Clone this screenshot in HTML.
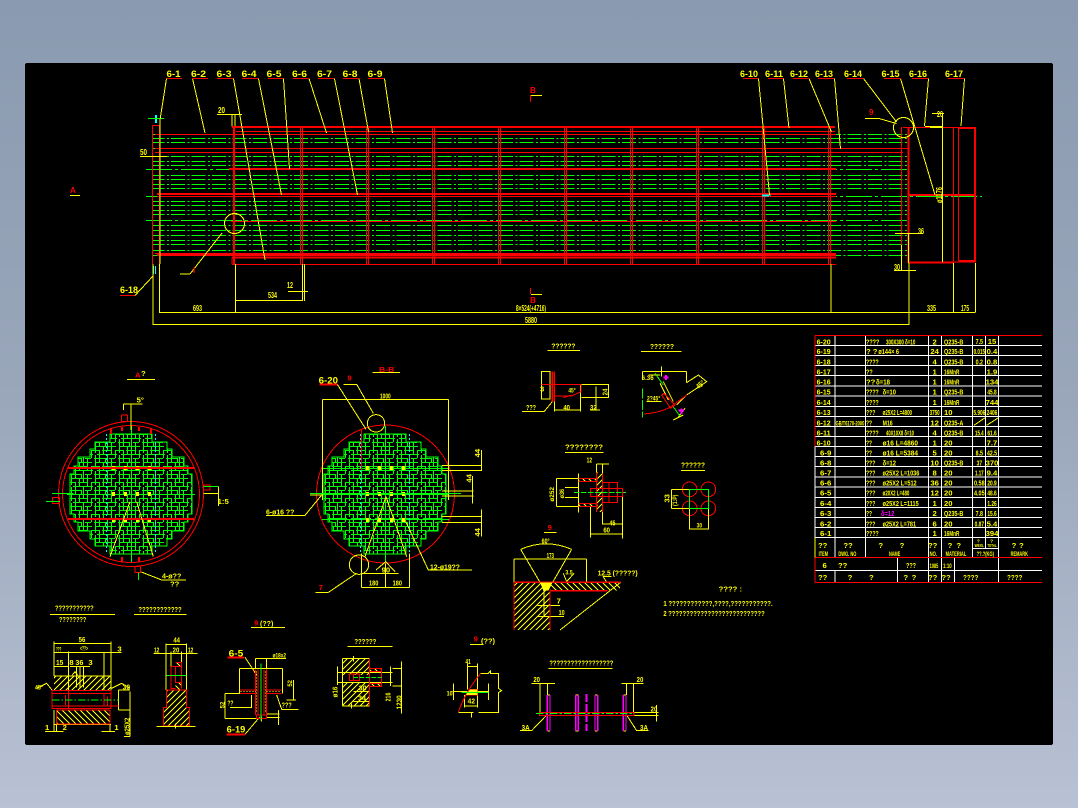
<!DOCTYPE html>
<html><head><meta charset="utf-8"><title>CAD</title>
<style>
html,body{margin:0;padding:0;width:1078px;height:808px;overflow:hidden;background:linear-gradient(180deg,#8a9ab0 0%,#9aa7bb 50%,#b9c1d4 100%)}
svg{position:absolute;left:0;top:0;display:block}
svg *{shape-rendering:crispEdges}
.y,.r,.g,.m,.c{fill:none;stroke-width:1}
.y{stroke:#ff0}.r{stroke:#f00}.g{stroke:#0f0}.m{stroke:#f0f}.c{stroke:#0ff}
.z .y,.z .r,.z .g,.z .m,.z .c{stroke-width:3}
.z .th{stroke-width:6}
.th2{stroke-width:2}
text{font-family:"Liberation Sans",sans-serif;font-weight:700;fill:#ff0;stroke:none;font-size:8px}
.z text{font-size:23px}
text.rt{fill:#f00}text.mt{fill:#f0f}
.m0{text-anchor:middle}
.lb text{font-size:9.5px}
</style></head><body>
<svg width="1078" height="808" viewBox="0 0 1078 808" xmlns="http://www.w3.org/2000/svg">
<defs>
<pattern id="tile" width="24" height="16" patternUnits="userSpaceOnUse">
<path class="g" d="M0 .5H9M12 .5H24M0 4.5H5M8 4.5H16M19 4.5H24M0 8.5H10M14 8.5H24M2 12.5H8M11 12.5H22M.5 0V4M4.5 1V9M8.5 4V12M12.5 0V7M16.5 4V16M20.5 0V9M12.5 9V16M4.5 12V16M.5 9V16M22.5 12V16"/>
</pattern>
<pattern id="h1" width="18" height="18" patternUnits="userSpaceOnUse">
<path class="y" style="stroke-width:3" d="M-3 3L3 -3M0 18L18 0M15 21L21 15"/>
</pattern>
<pattern id="h2" width="18" height="18" patternUnits="userSpaceOnUse">
<path class="y" style="stroke-width:3" d="M-3 15L3 21M0 0L18 18M15 -3L21 3"/>
</pattern>
<clipPath id="stair"><polygon points="-21,-60 21,-60 21,-52 36,-52 36,-45 41,-45 41,-37 53,-37 53,-28 57,-28 57,-20 61,-20 61,20 57,20 57,28 53,28 53,37 41,37 41,45 36,45 36,52 21,52 21,60 -21,60 -21,52 -36,52 -36,45 -41,45 -41,37 -53,37 -53,28 -57,28 -57,20 -61,20 -61,-20 -57,-20 -57,-28 -53,-28 -53,-37 -41,-37 -41,-45 -36,-45 -36,-52 -21,-52"/></clipPath>
<g id="plate">
<g clip-path="url(#stair)"><rect x="-72" y="-64" width="144" height="128" fill="url(#tile)"/></g>
<polygon class="g" points="-21,-60 21,-60 21,-52 36,-52 36,-45 41,-45 41,-37 53,-37 53,-28 57,-28 57,-20 61,-20 61,20 57,20 57,28 53,28 53,37 41,37 41,45 36,45 36,52 21,52 21,60 -21,60 -21,52 -36,52 -36,45 -41,45 -41,37 -53,37 -53,28 -57,28 -57,20 -61,20 -61,-20 -57,-20 -57,-28 -53,-28 -53,-37 -41,-37 -41,-45 -36,-45 -36,-52 -21,-52"/>
<path class="g" d="M-64 .5H64M-64 -25.5H64M-64 25.5H64M.5 -68V68"/>
<path class="c" stroke-dasharray="2 2" d="M-24.5 -60V60M24.5 -60V60"/>
<g fill="#ff0"><rect x="-19" y="-28" width="3" height="4"/><rect x="-7" y="-28" width="3" height="4"/><rect x="5" y="-28" width="3" height="4"/><rect x="17" y="-28" width="3" height="4"/><rect x="-19" y="-2" width="3" height="4"/><rect x="-7" y="-2" width="3" height="4"/><rect x="5" y="-2" width="3" height="4"/><rect x="17" y="-2" width="3" height="4"/><rect x="-19" y="24" width="3" height="4"/><rect x="-7" y="24" width="3" height="4"/><rect x="5" y="24" width="3" height="4"/><rect x="17" y="24" width="3" height="4"/></g>
</g>
</defs>

<rect x="25" y="63" width="1028" height="682" rx="2" fill="#000"/>

<!-- MAIN VIEW -->
<path class="g" stroke-dasharray="14 2.5 2 2" stroke-dashoffset="2.3" d="M153 134.5H909M153 138.5H909M153 142.5H909M153 148.5H909M153 156.5H909M153 161.5H909M153 165.5H909M153 175.5H909M153 179.5H909M153 184.5H909M153 188.5H909M153 201.5H909M153 205.5H909M153 210.5H909M153 214.5H909M153 225.5H909M153 230.5H909M153 235.5H909M153 240.5H909M153 244.5H909M153 250.5H909M153 255.5H909"/>
<path class="g" stroke-dasharray="26 3 3 3" d="M146 169.5H909M146 196.5H982M146 220.5H909"/>
<path class="r" d="M152.5 125V264M152.5 125.5H159.5V131M159.5 125V264M232 114V126.5H835M236 131.5H835M155 134.5H836M155 148.5H909M155 152.5H903M231 221.5H836M157 196.5H836M155 253.5H836M232 264.5H836M232 258V264"/>
<path class="r th2" d="M229 169H836M232 127H835M157 194H836M232 257.5H836M157 255H836M908 195H976M234 127V264M908.5 128V263M908 262.5H953"/>
<path class="r" d="M300.5 127V264M302.5 127V264M366.5 127V264M368.5 127V264M432.5 127V264M434.5 127V264M498.5 127V264M500.5 127V264M564.5 127V264M566.5 127V264M630.5 127V264M632.5 127V264M696.5 127V264M698.5 127V264M762.5 127V264M764.5 127V264M828.5 127V264M830.5 127V264M901.5 127V263M953.5 127V263M958.5 128V261M903 127.5H976M953 262H976"/>
<path class="r th2" d="M975 127V262M959 128H975M959 261H975"/>
<path class="c" d="M153.5 266V274M155.5 266V274M762 195H771M762 196H769"/>
<rect x="155" y="115" width="2" height="8" fill="#0ff"/>
<path class="g" d="M148 118.5H164"/>
<!-- leaders -->
<path class="y" d="M166.5 78.5L160 120M160 120V264M192.5 78.5L205 133M233.5 78.5L265 260M258.5 78.5L281.5 195M283.5 78.5L289.5 169M309 78.5L326.5 133M334.5 78.5L357.5 195M359 78.5L368.5 132M384.5 78.5L392.5 133M758.5 78.5L769.5 195M783.5 78.5L789 128M809 78.5L831.5 132M834.5 78.5L840.5 149M863.5 78.5L896.5 122M900.5 78.5L935 195M928.5 78.5L924.5 126M964.5 78.5L961 126M865 118.5H879L896.5 123.5M190 274L222 233M190 274H180"/>
<circle class="y" cx="234.5" cy="223.5" r="10"/><circle class="y" cx="903.5" cy="127.5" r="10"/>
<path class="r" d="M167 78.5H182M192 78.5H208M217 78.5H233M242 78.5H258M268 78.5H283M293 78.5H309M318 78.5H334M343 78.5H359M368 78.5H384M743 78.5H758M768 78.5H783M793 78.5H809M818 78.5H834M847 78.5H863M884 78.5H901M912 78.5H928M948 78.5H964"/>
<g class="lb">
<text x="166.5" y="77" textLength="14" lengthAdjust="spacingAndGlyphs">6-1</text><text x="191" y="77" textLength="15" lengthAdjust="spacingAndGlyphs">6-2</text><text x="216.5" y="77" textLength="15" lengthAdjust="spacingAndGlyphs">6-3</text><text x="241.5" y="77" textLength="15" lengthAdjust="spacingAndGlyphs">6-4</text><text x="266.5" y="77" textLength="15" lengthAdjust="spacingAndGlyphs">6-5</text><text x="292" y="77" textLength="15" lengthAdjust="spacingAndGlyphs">6-6</text><text x="317" y="77" textLength="15" lengthAdjust="spacingAndGlyphs">6-7</text><text x="342.5" y="77" textLength="15" lengthAdjust="spacingAndGlyphs">6-8</text><text x="367.5" y="77" textLength="15" lengthAdjust="spacingAndGlyphs">6-9</text>
<text x="740" y="77" textLength="18" lengthAdjust="spacingAndGlyphs">6-10</text><text x="765" y="77" textLength="18" lengthAdjust="spacingAndGlyphs">6-11</text><text x="790" y="77" textLength="18" lengthAdjust="spacingAndGlyphs">6-12</text><text x="815" y="77" textLength="18" lengthAdjust="spacingAndGlyphs">6-13</text><text x="844" y="77" textLength="18" lengthAdjust="spacingAndGlyphs">6-14</text><text x="881.5" y="77" textLength="18" lengthAdjust="spacingAndGlyphs">6-15</text><text x="909" y="77" textLength="18" lengthAdjust="spacingAndGlyphs">6-16</text><text x="945" y="77" textLength="18" lengthAdjust="spacingAndGlyphs">6-17</text>
<text x="120" y="293" textLength="18" lengthAdjust="spacingAndGlyphs">6-18</text>
</g>
<path class="r" d="M120 295.5H135"/><path class="y" d="M135 295.5L153 276"/>
<!-- dims -->
<path class="y" d="M159.5 264V312M153 264V325M235.5 264V312M831 264V312M909 263V325M953.5 263V312M975.5 263V312M159 312.5H975.5M153 324.5H909M236 300.5H302M302.5 264V301M304.5 264V301M288 291.5H308M217 114.5H242M232 114V126M235 114V126M140 156.5H167M942.5 113V262M925 126.5H942M895 233.5H923M908.5 233V263M894 270.5H916M901.5 245V270M932 113.5H944"/>
<path class="y th2" d="M930 127H942"/>
<path class="r" d="M530.5 95V102M530.5 288V294"/><path class="y" d="M531 95.5H542M531 294.5H542M70 195.5H80"/>
<text x="218" y="113" textLength="7" lengthAdjust="spacingAndGlyphs">20</text><text x="140" y="155" textLength="7" lengthAdjust="spacingAndGlyphs">50</text><text x="268" y="298" textLength="9" lengthAdjust="spacingAndGlyphs">534</text><text x="193" y="311" textLength="9" lengthAdjust="spacingAndGlyphs">693</text><text x="516" y="311" textLength="30" lengthAdjust="spacingAndGlyphs">8×524(+4716)</text><text x="525" y="323" textLength="12" lengthAdjust="spacingAndGlyphs">5880</text><text x="927" y="311" textLength="9" lengthAdjust="spacingAndGlyphs">335</text><text x="961" y="311" textLength="8" lengthAdjust="spacingAndGlyphs">175</text><text x="287" y="288" textLength="6" lengthAdjust="spacingAndGlyphs">12</text><text x="918" y="234" textLength="6" lengthAdjust="spacingAndGlyphs">36</text><text x="894" y="270" textLength="6" lengthAdjust="spacingAndGlyphs">30</text><text x="937" y="117" textLength="6" lengthAdjust="spacingAndGlyphs">20</text>
<text transform="translate(942 203) rotate(-90)" textLength="16" lengthAdjust="spacingAndGlyphs">ø1176</text>
<text class="rt" x="530" y="93">B</text><text class="rt" x="530" y="303">B</text><text class="rt" x="70" y="193" >A</text><text class="rt" x="193" y="273">I</text><text class="rt" x="869" y="115">9</text>

<!-- PLATE A -->
<use href="#plate" x="131" y="494"/>
<circle class="r" cx="131" cy="494" r="72.5"/><circle class="r" cx="131" cy="494" r="68.5"/>
<path class="r th2" d="M68 468H194M68 519H194"/>
<path class="r" style="stroke-width:2" d="M111 428V434M122 427V431M139 427V431M151 429V434M122 557V562M139 557V562"/>
<g class="z" transform="translate(30 360) scale(.33333)">
<path class="y" d="M291 58H375M303 132V210M280 132H338M280 132V150M520 400H565V380M565 400V438M395 660H468M334 636L395 660M300 425L240 590M320 425L370 590M112 400H130"/>
<path class="r" d="M275 165H292V185H275ZM520 375H540V390H520ZM68 412H88V430H68ZM315 620H332V638H315Z"/>
<path class="g" d="M48 424H90M66 400H130M520 380H565M325 638V660"/>
<text class="rt" x="315" y="52">A</text><text x="333" y="48">?</text><text x="320" y="128">5°</text><text x="563" y="432">1:5</text><text x="396" y="656" textLength="58" lengthAdjust="spacingAndGlyphs">4-ø??</text><text x="420" y="680">??</text>
</g>

<!-- PLATE B -->
<use href="#plate" x="385" y="494"/>
<circle class="r" cx="385.5" cy="494" r="69"/>
<g class="z" transform="translate(260 360) scale(.33333)">
<path class="y" d="M338 37H420M187 118H565M187 118V420M565 118V420M232 73L318 208M250 73H290L340 160M546 317H664M546 331H664M546 393H640M546 408H640M546 469H664M546 488H664M664 270V333M664 448V530M638 348V430M18 466H135L185 405M185 405H150M305 580V682M449 580V682M305 682H449M377 610V682M305 640H415M348 630L377 605L405 635M205 697L290 640M166 697H205M435 480L505 630H636M378 410L315 590M378 410L440 590"/>
<circle class="y" cx="348" cy="190" r="26"/><circle class="y" cx="297" cy="614" r="29"/>
<path class="r" style="stroke-width:6" d="M178 73H232"/>
<path class="r" d="M305 210V330"/>
<path class="g" d="M150 400H603"/>
<text class="rt" x="357" y="36" textLength="46" lengthAdjust="spacingAndGlyphs">B-B</text><text x="176" y="70" textLength="58" lengthAdjust="spacingAndGlyphs" style="font-size:28px">6-20</text><text class="rt" x="262" y="62">9</text><text x="360" y="116" textLength="32" lengthAdjust="spacingAndGlyphs">1000</text>
<text x="18" y="463" textLength="85" lengthAdjust="spacingAndGlyphs">6-ø16 ??</text><text x="510" y="628" textLength="90" lengthAdjust="spacingAndGlyphs">12-ø19??</text><text class="rt" x="176" y="690">7</text>
<text x="327" y="677" textLength="28" lengthAdjust="spacingAndGlyphs">180</text><text x="398" y="677" textLength="28" lengthAdjust="spacingAndGlyphs">180</text><text x="365" y="638">90</text>
<text transform="translate(660 292) rotate(-90)">44</text><text transform="translate(634 368) rotate(-90)">44</text><text transform="translate(660 530) rotate(-90)">44</text>
</g>

<!-- TABLE -->
<g class="z" transform="translate(810 330) scale(.33333)">
<path class="y" style="stroke:#fff" d="M15 46H696M15 76H696M15 107H696M15 137H696M15 168H696M15 198H696M15 229H696M15 259H696M15 290H696M15 320H696M15 349H696M15 380H696M15 410H696M15 441H696M15 471H696M15 502H696M15 532H696M15 563H696M15 593H696M15 622H696M15 722H696M75 16V622M166 16V622M355 16V683M394 16V683M488 16V622M527 16V622M566 16V622M15 350V622M75 622V683M166 622V683M488 622V683M566 622V683M527 622V655M488 655H566M262 683V758M355 683V758M394 683V758M433 683V758M566 683V758M75 722V758"/>
<path class="r" d="M15 16H696M15 16V349M15 683H696M15 758H696M15 683V758"/>
<path class="y" d="M492 286L524 264M530 286L564 264"/>
<path class="y" style="stroke:#ff0" d="M15 622V683"/>
<g>
<text x="20" y="44" textLength="42" lengthAdjust="spacingAndGlyphs">6-20</text><text x="20" y="72" textLength="42" lengthAdjust="spacingAndGlyphs">6-19</text><text x="20" y="103" textLength="42" lengthAdjust="spacingAndGlyphs">6-18</text><text x="20" y="133" textLength="42" lengthAdjust="spacingAndGlyphs">6-17</text><text x="20" y="164" textLength="42" lengthAdjust="spacingAndGlyphs">6-16</text><text x="20" y="194" textLength="42" lengthAdjust="spacingAndGlyphs">6-15</text><text x="20" y="225" textLength="42" lengthAdjust="spacingAndGlyphs">6-14</text><text x="20" y="255" textLength="42" lengthAdjust="spacingAndGlyphs">6-13</text><text x="20" y="286" textLength="42" lengthAdjust="spacingAndGlyphs">6-12</text><text x="20" y="316" textLength="42" lengthAdjust="spacingAndGlyphs">6-11</text><text x="20" y="346" textLength="42" lengthAdjust="spacingAndGlyphs">6-10</text>
<text x="30" y="376" textLength="34" lengthAdjust="spacingAndGlyphs">6-9</text><text x="30" y="406" textLength="34" lengthAdjust="spacingAndGlyphs">6-8</text><text x="30" y="437" textLength="34" lengthAdjust="spacingAndGlyphs">6-7</text><text x="30" y="467" textLength="34" lengthAdjust="spacingAndGlyphs">6-6</text><text x="30" y="497" textLength="34" lengthAdjust="spacingAndGlyphs">6-5</text><text x="30" y="528" textLength="34" lengthAdjust="spacingAndGlyphs">6-4</text><text x="30" y="558" textLength="34" lengthAdjust="spacingAndGlyphs">6-3</text><text x="30" y="589" textLength="34" lengthAdjust="spacingAndGlyphs">6-2</text><text x="30" y="618" textLength="34" lengthAdjust="spacingAndGlyphs">6-1</text>
<text x="77" y="286" textLength="86" lengthAdjust="spacingAndGlyphs" style="font-size:19px">GB/T6170-2000</text>
<text x="168" y="44" textLength="40" lengthAdjust="spacingAndGlyphs">????</text><text x="228" y="44" textLength="88" lengthAdjust="spacingAndGlyphs">300X300 δ=10</text>
<text x="168" y="72">? ?</text><text x="205" y="72" textLength="62" lengthAdjust="spacingAndGlyphs">ø144× 6</text>
<text x="168" y="103" textLength="38" lengthAdjust="spacingAndGlyphs">????</text><text x="168" y="133" textLength="20" lengthAdjust="spacingAndGlyphs">??</text>
<text x="168" y="164">??</text><text x="198" y="164" textLength="42" lengthAdjust="spacingAndGlyphs">δ=18</text><text x="168" y="194" textLength="38" lengthAdjust="spacingAndGlyphs">????</text><text x="218" y="194" textLength="40" lengthAdjust="spacingAndGlyphs">δ=10</text><text x="168" y="225" textLength="38" lengthAdjust="spacingAndGlyphs">????</text>
<text x="168" y="255" textLength="28" lengthAdjust="spacingAndGlyphs">???</text><text x="218" y="255" textLength="88" lengthAdjust="spacingAndGlyphs">ø25X2 L=4800</text>
<text x="168" y="286" textLength="18" lengthAdjust="spacingAndGlyphs">??</text><text x="218" y="286" textLength="30" lengthAdjust="spacingAndGlyphs">M16</text>
<text x="168" y="316" textLength="38" lengthAdjust="spacingAndGlyphs">????</text><text x="228" y="316" textLength="84" lengthAdjust="spacingAndGlyphs">40X10X8 δ=10</text>
<text x="168" y="346" textLength="18" lengthAdjust="spacingAndGlyphs">??</text><text x="218" y="346" textLength="106" lengthAdjust="spacingAndGlyphs">ø16 L=4860</text>
<text x="168" y="376" textLength="18" lengthAdjust="spacingAndGlyphs">??</text><text x="218" y="376" textLength="106" lengthAdjust="spacingAndGlyphs">ø16 L=5384</text>
<text x="168" y="407" textLength="28" lengthAdjust="spacingAndGlyphs">???</text><text x="218" y="407" textLength="40" lengthAdjust="spacingAndGlyphs">δ=12</text>
<text x="168" y="437" textLength="28" lengthAdjust="spacingAndGlyphs">???</text><text x="218" y="437" textLength="110" lengthAdjust="spacingAndGlyphs">ø25X2 L=1036</text>
<text x="168" y="467" textLength="28" lengthAdjust="spacingAndGlyphs">???</text><text x="218" y="467" textLength="102" lengthAdjust="spacingAndGlyphs">ø25X2 L=512</text>
<text x="168" y="497" textLength="28" lengthAdjust="spacingAndGlyphs">???</text><text x="218" y="497" textLength="80" lengthAdjust="spacingAndGlyphs">ø20X2 L=480</text>
<text x="168" y="528" textLength="28" lengthAdjust="spacingAndGlyphs">???</text><text x="218" y="528" textLength="108" lengthAdjust="spacingAndGlyphs">ø25X2 L=1115</text>
<text x="168" y="558" textLength="18" lengthAdjust="spacingAndGlyphs">??</text><text class="mt" x="213" y="558" textLength="40" lengthAdjust="spacingAndGlyphs">δ=12</text>
<text x="168" y="589" textLength="28" lengthAdjust="spacingAndGlyphs">???</text><text x="218" y="589" textLength="100" lengthAdjust="spacingAndGlyphs">ø25X2 L=781</text>
<text x="168" y="618" textLength="38" lengthAdjust="spacingAndGlyphs">????</text>
</g>
<g class="m0">
<text x="374" y="44">2</text><text x="374" y="72">24</text><text x="374" y="103">4</text><text x="374" y="133">1</text><text x="374" y="164">1</text><text x="374" y="194">1</text><text x="374" y="225">1</text><text x="374" y="255" textLength="30" lengthAdjust="spacingAndGlyphs">3750</text><text x="374" y="286">12</text><text x="374" y="316">4</text><text x="374" y="346">1</text><text x="374" y="376">5</text><text x="374" y="407">10</text><text x="374" y="437">8</text><text x="374" y="467">36</text><text x="374" y="497">12</text><text x="374" y="528">1</text><text x="374" y="558">2</text><text x="374" y="589">6</text><text x="374" y="618">1</text>
</g>
<g>
<text x="402" y="44" textLength="58" lengthAdjust="spacingAndGlyphs">Q235-B</text><text x="402" y="72" textLength="58" lengthAdjust="spacingAndGlyphs">Q235-B</text><text x="402" y="103" textLength="58" lengthAdjust="spacingAndGlyphs">Q235-B</text><text x="402" y="133" textLength="46" lengthAdjust="spacingAndGlyphs">16MnR</text><text x="402" y="164" textLength="46" lengthAdjust="spacingAndGlyphs">16MnR</text><text x="402" y="194" textLength="58" lengthAdjust="spacingAndGlyphs">Q235-B</text><text x="402" y="225" textLength="46" lengthAdjust="spacingAndGlyphs">16MnR</text><text x="402" y="255">10</text><text x="402" y="286" textLength="58" lengthAdjust="spacingAndGlyphs">Q235-A</text><text x="402" y="316" textLength="58" lengthAdjust="spacingAndGlyphs">Q235-B</text><text x="402" y="346">20</text><text x="402" y="376">20</text><text x="402" y="407" textLength="58" lengthAdjust="spacingAndGlyphs">Q235-B</text><text x="402" y="437">20</text><text x="402" y="467">20</text><text x="402" y="497">20</text><text x="402" y="528">20</text><text x="402" y="558" textLength="58" lengthAdjust="spacingAndGlyphs">Q235-B</text><text x="402" y="589">20</text><text x="402" y="618" textLength="46" lengthAdjust="spacingAndGlyphs">16MnR</text>
</g>
<g class="m0">
<text x="508" y="42" textLength="22" lengthAdjust="spacingAndGlyphs">7.5</text><text x="508" y="72" textLength="34" lengthAdjust="spacingAndGlyphs">0.015</text><text x="508" y="103" textLength="22" lengthAdjust="spacingAndGlyphs">0.2</text><text x="508" y="255" textLength="36" lengthAdjust="spacingAndGlyphs">5.906</text><text x="508" y="316" textLength="26" lengthAdjust="spacingAndGlyphs">15.4</text><text x="508" y="376" textLength="22" lengthAdjust="spacingAndGlyphs">8.5</text><text x="508" y="407" textLength="16" lengthAdjust="spacingAndGlyphs">37</text><text x="508" y="437" textLength="26" lengthAdjust="spacingAndGlyphs">1.17</text><text x="508" y="467" textLength="32" lengthAdjust="spacingAndGlyphs">0.58</text><text x="508" y="497" textLength="32" lengthAdjust="spacingAndGlyphs">4.05</text><text x="508" y="558" textLength="22" lengthAdjust="spacingAndGlyphs">7.8</text><text x="508" y="589" textLength="28" lengthAdjust="spacingAndGlyphs">0.87</text>
<text x="546" y="42">15</text><text x="546" y="72">0.4</text><text x="546" y="103">0.8</text><text x="546" y="133">1.9</text><text x="546" y="164">134</text><text x="546" y="194" textLength="28" lengthAdjust="spacingAndGlyphs">45.8</text><text x="546" y="225">744</text><text x="546" y="255" textLength="32" lengthAdjust="spacingAndGlyphs">2406</text><text x="546" y="316" textLength="28" lengthAdjust="spacingAndGlyphs">61.6</text><text x="546" y="346">7.7</text><text x="546" y="376" textLength="30" lengthAdjust="spacingAndGlyphs">42.5</text><text x="546" y="407">370</text><text x="546" y="437">9.4</text><text x="546" y="467" textLength="28" lengthAdjust="spacingAndGlyphs">20.9</text><text x="546" y="497" textLength="28" lengthAdjust="spacingAndGlyphs">48.6</text><text x="546" y="528" textLength="28" lengthAdjust="spacingAndGlyphs">1.26</text><text x="546" y="558" textLength="28" lengthAdjust="spacingAndGlyphs">15.6</text><text x="546" y="589">5.4</text><text x="546" y="618">394</text>
</g>
<g class="m0">
<text x="38" y="654">??</text><text x="114" y="654">??</text><text x="212" y="654">?</text><text x="276" y="654">?</text><text x="368" y="654">??</text><text x="420" y="654">?</text><text x="446" y="654">?</text><text x="612" y="654">?</text><text x="634" y="654">?</text>
<text x="40" y="678" textLength="28" lengthAdjust="spacingAndGlyphs" style="font-size:19px">ITEM</text><text x="112" y="678" textLength="54" lengthAdjust="spacingAndGlyphs" style="font-size:19px">DWG. NO</text><text x="254" y="678" textLength="34" lengthAdjust="spacingAndGlyphs" style="font-size:19px">NAME</text><text x="370" y="678" textLength="22" lengthAdjust="spacingAndGlyphs" style="font-size:19px">NO.</text><text x="438" y="678" textLength="62" lengthAdjust="spacingAndGlyphs" style="font-size:19px">MATERIAL</text><text x="628" y="678" textLength="52" lengthAdjust="spacingAndGlyphs" style="font-size:19px">REMARK</text>
<text x="505" y="638" style="font-size:15px">?</text><text x="545" y="638" style="font-size:15px">?</text><text x="508" y="651" textLength="28" lengthAdjust="spacingAndGlyphs" style="font-size:13px">WEIG.</text><text x="546" y="651" textLength="28" lengthAdjust="spacingAndGlyphs" style="font-size:13px">TOTAL</text><text x="526" y="678" textLength="52" lengthAdjust="spacingAndGlyphs" style="font-size:18px">??.?(KG)</text>
<text x="44" y="714">6</text><text x="98" y="714">??</text><text x="303" y="714" textLength="30" lengthAdjust="spacingAndGlyphs">???</text><text x="372" y="714" textLength="26" lengthAdjust="spacingAndGlyphs" style="font-size:19px">1085</text><text x="412" y="714" textLength="26" lengthAdjust="spacingAndGlyphs" style="font-size:19px">1:10</text>
<text x="38" y="750">??</text><text x="120" y="750">?</text><text x="184" y="750">?</text><text x="287" y="750">?</text><text x="312" y="750">?</text><text x="368" y="750">??</text><text x="408" y="750">??</text><text x="482" y="750" textLength="46" lengthAdjust="spacingAndGlyphs">????</text><text x="614" y="750" textLength="46" lengthAdjust="spacingAndGlyphs">????</text>
</g>
</g>

<!-- BOTTOM LEFT DETAILS -->
<g class="z" transform="translate(30 600) scale(.33333)">
<path class="y" d="M60 43H255M312 43H470M663 82H765"/>
<text x="75" y="32" textLength="116" lengthAdjust="spacingAndGlyphs">???????????</text><text x="87" y="66" textLength="82" lengthAdjust="spacingAndGlyphs">????????</text><text x="325" y="36" textLength="130" lengthAdjust="spacingAndGlyphs">????????????</text><text class="rt" x="672" y="76">9</text><text x="690" y="78" textLength="40" lengthAdjust="spacingAndGlyphs">(??)</text>
<!-- detail1 -->
<rect x="72" y="228" width="171" height="42" fill="url(#h1)"/><rect x="80" y="330" width="160" height="42" fill="url(#h2)"/>
<path class="y" d="M72 130H243M72 125V228M243 125V270M72 158H275M115 155V272M222 158V272M72 200H115M120 200H180M140 200V262M150 200V262M160 200V262M72 228H243M72 374H243M72 330V395M80 372V395M240 372V395M45 395H100M215 395H255M265 270V330M300 275V410M282 410H300M265 270H300M265 330H300M20 265L50 250L66 270M245 265L275 250L300 265M127 225L135 215L143 225"/>
<path class="r" d="M66 272H243V325H66ZM115 272V325M66 280H243M66 318H243M222 280V318M80 330V372M240 330V372M80 372H240M80 330H240M106 285V315M232 290V318H265"/>
<path class="g" stroke-dasharray="22 6 5 6" d="M66 300H265"/>
<text x="146" y="126" textLength="20" lengthAdjust="spacingAndGlyphs">56</text><text x="78" y="155" textLength="16" lengthAdjust="spacingAndGlyphs" style="font-size:18px">???</text><text x="150" y="152" textLength="24" lengthAdjust="spacingAndGlyphs" style="font-size:18px">&lt;??&gt;</text><text x="262" y="155">3</text><text x="78" y="195" textLength="22" lengthAdjust="spacingAndGlyphs">15</text><text x="118" y="195">8</text><text x="136" y="195" textLength="24" lengthAdjust="spacingAndGlyphs">36</text><text x="175" y="195">3</text><text x="15" y="268" textLength="24" lengthAdjust="spacingAndGlyphs" style="font-size:20px">45°</text><text x="278" y="268" textLength="22" lengthAdjust="spacingAndGlyphs">30</text><text x="45" y="390">1</text><text x="98" y="390">2</text><text x="253" y="390">1</text><text transform="translate(298 405) rotate(-90)" textLength="52" lengthAdjust="spacingAndGlyphs">ø25X2</text>
<!-- detail2 -->
<path class="y" d="M408 133H470M408 130V270M470 130V270M370 160H503M423 155V200M455 155V190"/>
<polygon points="410,270 470,270 470,322 478,322 478,378 400,378 400,322 410,322" fill="url(#h1)"/>
<rect x="438" y="187" width="17" height="13" fill="url(#h2)"/><rect x="437" y="248" width="17" height="22" fill="url(#h2)"/>
<path class="r" d="M410 270H470V322H478V378H400V322H410ZM423 200H455V265M423 200V265H437M437 187H455V200M437 200V248H455"/>
<path class="g" d="M410 226H470"/>
<path class="y" d="M380 379H497M437 370V385"/>
<text x="430" y="128" textLength="20" lengthAdjust="spacingAndGlyphs">44</text><text x="372" y="157" textLength="16" lengthAdjust="spacingAndGlyphs">12</text><text x="428" y="157" textLength="20" lengthAdjust="spacingAndGlyphs">20</text><text x="474" y="157" textLength="16" lengthAdjust="spacingAndGlyphs">12</text>
<!-- detail3 -->
<path class="y" d="M676 175H768M676 175V205M710 175V205M628 205H757M628 205V280M757 205V280M645 172L680 225M585 280H630M585 280V355M585 355H680M600 322H665V285M755 328H805M740 285L755 328M790 240V300M770 300H798M710 352H748M710 342H748M745 330V375M645 403L690 350M695 350V365"/>
<path class="r th" d="M592 172H642M590 403H645"/>
<path class="r" d="M676 208V345M684 208V345M702 208V345M710 208V345M630 270H678M708 270H755M630 280H678M708 280H755M680 345H710V356H680Z"/>
<path class="g" d="M693 190V362"/>
<path class="y" stroke-dasharray="3 6" d="M680 215V340M706 215V340M632 275H678M710 275H752"/>
<text x="596" y="170" textLength="44" lengthAdjust="spacingAndGlyphs" style="font-size:28px">6-5</text><text x="728" y="172" textLength="40" lengthAdjust="spacingAndGlyphs" style="font-size:20px">ø18x2</text><text x="592" y="316" textLength="18" lengthAdjust="spacingAndGlyphs">??</text><text x="755" y="322" textLength="30" lengthAdjust="spacingAndGlyphs">???</text><text x="590" y="398" textLength="56" lengthAdjust="spacingAndGlyphs" style="font-size:28px">6-19</text><text transform="translate(584 325) rotate(-90)" style="font-size:18px">52</text><text transform="translate(786 260) rotate(-90)" style="font-size:18px">52</text>
</g>

<!-- BOTTOM MIDDLE DETAILS -->
<g class="z" transform="translate(320 620) scale(.33333)">
<path class="y" d="M82 79H218M450 73H490M685 146H878"/>
<text x="103" y="72" textLength="66" lengthAdjust="spacingAndGlyphs">??????</text><text class="rt" x="461" y="64">9</text><text x="483" y="70" textLength="42" lengthAdjust="spacingAndGlyphs">(??)</text><text x="688" y="136" textLength="192" lengthAdjust="spacingAndGlyphs">??????????????????</text>
<!-- d1 -->
<rect x="67" y="115" width="81" height="50" fill="url(#h1)"/><rect x="67" y="188" width="81" height="70" fill="url(#h1)"/><rect x="148" y="145" width="37" height="10" fill="url(#h2)"/><rect x="148" y="190" width="37" height="10" fill="url(#h2)"/>
<path class="y" d="M67 115H148M67 115V258M67 258H148M52 158H218M52 188H218M52 140V195M100 108V125M95 250V265M148 115V258M100 215H148M100 245H148M245 125V280M218 145H245M218 198H245M212 140V198"/>
<path class="r" d="M88 162H118V182H88ZM100 162V182M148 115V258M148 145H185V200H148M148 155H185M148 190H185"/>
<path class="g" stroke-dasharray="14 4" d="M100 172H185"/>
<text x="116" y="212" textLength="24" lengthAdjust="spacingAndGlyphs">30</text><text x="114" y="242" textLength="24" lengthAdjust="spacingAndGlyphs">34</text><text transform="translate(52 232) rotate(-90)" textLength="32" lengthAdjust="spacingAndGlyphs">ø16</text><text transform="translate(211 244) rotate(-90)" textLength="26" lengthAdjust="spacingAndGlyphs">216</text><text transform="translate(244 268) rotate(-90)" textLength="42" lengthAdjust="spacingAndGlyphs">1230</text>
<!-- d2 -->
<path class="y" d="M442 140H472M442 130V208M472 130V208M397 215H505M400 190V240M505 190V240M433 225V262M472 225V262M433 258H472M415 277H460M455 277V292M482 160H505L512 152V160H535V205L545 212L535 218V277H475"/>
<path class="r" d="M415 275Q440 210 482 160M437 225H472V208H450Z"/>
<polygon points="437,225 472,225 472,209 450,209" fill="#ff0"/>
<path class="g" d="M425 217H505"/>
<text x="436" y="132" textLength="16" lengthAdjust="spacingAndGlyphs">41</text><text x="380" y="226" textLength="18" lengthAdjust="spacingAndGlyphs" style="font-size:18px">10</text><text x="443" y="250" textLength="22" lengthAdjust="spacingAndGlyphs">42</text>
<!-- d3 -->
<path class="y" d="M635 190H705M905 190H970M660 190V280M682 190V225M920 190V225M940 190V280M600 332H635L680 285M950 332L920 285M950 332H985M942 278H1015M942 287H1015M1010 255V305M690 225H682M918 225H910M767 225H775M825 225H833M690 333H682M918 333H910M767 333H775M825 333H833"/>
<path class="m" style="stroke-width:4" d="M682 225V333M690 225V333M767 225V333M775 225V333M825 225V333M833 225V333M910 225V333M918 225V333"/>
<path class="m" style="stroke-width:6" stroke-dasharray="24 6" d="M800 222V333"/>
<rect class="r" x="658" y="277" width="284" height="10"/>
<path class="g" stroke-dasharray="22 6 8 6" d="M648 281H942"/>
<text x="640" y="186" textLength="20" lengthAdjust="spacingAndGlyphs">20</text><text x="950" y="186" textLength="20" lengthAdjust="spacingAndGlyphs">20</text><text x="605" y="330" textLength="24" lengthAdjust="spacingAndGlyphs">3A</text><text x="960" y="330" textLength="24" lengthAdjust="spacingAndGlyphs">3A</text><text x="992" y="274" textLength="20" lengthAdjust="spacingAndGlyphs">20</text>
</g>

<!-- UPPER MIDDLE DETAILS -->
<g class="z" transform="translate(500 330) scale(.33333)">
<path class="y" d="M142 62H240M423 64H545M195 368H310M543 421H615M132 607H170"/>
<text x="154" y="56" textLength="72" lengthAdjust="spacingAndGlyphs">??????</text><text x="450" y="57" textLength="72" lengthAdjust="spacingAndGlyphs">??????</text><text x="195" y="358" textLength="114" lengthAdjust="spacingAndGlyphs">????????</text><text x="543" y="412" textLength="72" lengthAdjust="spacingAndGlyphs">??????</text><text class="rt" x="143" y="600">9</text>
<!-- d a -->
<path class="y" d="M125 125H150V207H125ZM125 125V207M163 203V245M242 163V245M163 240H242M245 163H325V203H245M288 170V240M270 240H300M325 163V203M66 245H132L157 215"/>
<path class="r" style="stroke-width:4" d="M157 125V215M163 125V215"/>
<path class="r" d="M125 163H243V185L215 198H163M190 203L215 195"/>
<text x="78" y="240" textLength="30" lengthAdjust="spacingAndGlyphs">???</text><text x="190" y="240" textLength="20" lengthAdjust="spacingAndGlyphs">40</text><text x="205" y="187" textLength="22" lengthAdjust="spacingAndGlyphs" style="font-size:20px">45°</text><text x="270" y="240" textLength="20" lengthAdjust="spacingAndGlyphs">32</text><text transform="translate(322 196) rotate(-90)" textLength="20" lengthAdjust="spacingAndGlyphs">24</text><text x="120" y="185">3</text>
<!-- d b -->
<path class="y" d="M427 125H560M427 125V150M560 125V158M560 158L595 135L620 155L560 195L530 225M485 110V140M480 160L505 210M490 155L520 215M535 260L555 235M520 270L550 255M440 215H485M445 135H480"/>
<path class="g" stroke-dasharray="30 5" d="M428 175V262"/>
<path class="g" d="M465 130L490 165M518 228L540 258"/>
<path class="r" d="M430 252Q480 248 510 232L560 195M492 190L525 225L512 235L485 195Z"/>
<path class="m" style="stroke-width:6" d="M490 142H505M498 135V150M535 242H552M545 235V252"/>
<text x="425" y="150" textLength="36" lengthAdjust="spacingAndGlyphs" style="font-size:20px">6.36</text><text x="441" y="212" textLength="40" lengthAdjust="spacingAndGlyphs" style="font-size:20px">2?45°</text>
<text transform="translate(595 178) rotate(-38)" textLength="26" lengthAdjust="spacingAndGlyphs">45°</text>
<!-- d c -->
<path class="y" d="M290 402H327M290 402V430M307 402V430M170 445H290M170 530H290M170 445V530M195 472H235M195 502H235M235 430V548M272 530V622M272 612H367M367 500V626M307 560V582H367M307 540V560"/>
<rect x="290" y="428" width="17" height="118" fill="url(#h1)"/><rect x="237" y="445" width="55" height="10" fill="url(#h2)"/><rect x="237" y="520" width="55" height="10" fill="url(#h2)"/>
<path class="r" d="M235 445H292M235 455H292M235 520H292M235 530H292M272 475H367V500H272ZM307 430V546M290 428V546M307 457H352V517H307M327 457V517M327 457H352"/>
<path class="g" stroke-dasharray="16 5" d="M222 488H378"/>
<text x="260" y="398" textLength="16" lengthAdjust="spacingAndGlyphs">12</text><text transform="translate(162 515) rotate(-90)" textLength="44" lengthAdjust="spacingAndGlyphs" style="font-size:20px">ø252</text><text transform="translate(192 505) rotate(-90)" textLength="28" lengthAdjust="spacingAndGlyphs" style="font-size:20px">ø36</text><text x="328" y="586" textLength="18" lengthAdjust="spacingAndGlyphs">45</text><text x="310" y="608" textLength="20" lengthAdjust="spacingAndGlyphs">60</text>
<!-- d d -->
<circle class="r" cx="569" cy="478" r="22"/><circle class="r" cx="625" cy="478" r="22"/><circle class="r" cx="569" cy="535" r="22"/><circle class="r" cx="625" cy="535" r="22"/>
<path class="y" d="M515 478H569M515 535H569M515 478V535M569 535V598M625 535V598M569 597H625"/>
<path class="g" d="M569 478H625V535H569Z"/>
<text x="590" y="592" textLength="16" lengthAdjust="spacingAndGlyphs" style="font-size:18px">30</text><text transform="translate(508 518) rotate(-90)">33</text><text transform="translate(531 528) rotate(-90)" textLength="34" lengthAdjust="spacingAndGlyphs" style="font-size:18px">(1:P)</text>
<!-- weld -->
<rect x="42" y="757" width="108" height="143" fill="url(#h1)"/><rect x="150" y="757" width="210" height="25" fill="url(#h2)"/>
<path class="y" d="M62 658Q138 625 215 658M62 658L120 757M215 658L158 757M42 687H260M42 687V757M260 687V757M362 757L180 900M132 782V860M150 782V860M112 827H180M112 860H192M200 755L190 730M200 755L222 730M320 757L310 740H335"/>
<path class="r" style="stroke-width:4" d="M42 757H362M150 782H322"/><path class="r" style="stroke-width:4" d="M42 757V900M150 782V900"/>
<polygon points="120,757 158,757 145,782 130,782" fill="#ff0"/>
<text x="125" y="640" textLength="24" lengthAdjust="spacingAndGlyphs">60°</text><text x="140" y="684" textLength="22" lengthAdjust="spacingAndGlyphs">173</text><text x="196" y="733" textLength="22" lengthAdjust="spacingAndGlyphs" style="font-size:18px">3.5</text><text x="293" y="736" textLength="120" lengthAdjust="spacingAndGlyphs">12.5 (?????)</text><text x="170" y="820">7</text><text x="176" y="855" textLength="18" lengthAdjust="spacingAndGlyphs">10</text>
<text x="656" y="784" textLength="70" lengthAdjust="spacingAndGlyphs">???? :</text>
<text x="490" y="828" textLength="328" lengthAdjust="spacingAndGlyphs">1 ????????????,????,???????????.</text>
<text x="490" y="858" textLength="304" lengthAdjust="spacingAndGlyphs">2 ???????????????????????????</text>
</g>
</svg>
</body></html>
